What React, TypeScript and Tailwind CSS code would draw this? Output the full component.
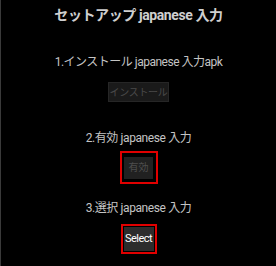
export default function App() {
  return (
    <div
      className="w-[276px] h-[266px] bg-black border-l border-[#3a3a3a] flex flex-col items-center text-[#c4c4c4] overflow-hidden whitespace-nowrap"
      style={{ fontFamily: 'Roboto, "Noto Sans CJK JP", sans-serif' }}
    >
      <div className="mt-[4px] text-[14px] leading-[22px] font-bold tracking-[-0.4px] text-[#cfcfcf]">セットアップ japanese 入力</div>
      <div className="mt-[27px] text-[12px] leading-[18px] tracking-[-0.5px]">1.インストール japanese 入力apk</div>
      <div className="mt-[11px] w-[61px] h-[20px] bg-[#1a1a1a] border border-[#262626] flex items-center justify-center text-[10px] tracking-[-0.3px] text-[#4a4a4a]">
        インストール
      </div>
      <div className="mt-[27px] text-[12px] leading-[18px] tracking-[-0.4px]">2.有効 japanese 入力</div>
      <div className="mt-[4px] w-[38px] h-[33px] border-2 border-[#e00000] flex items-center justify-center">
        <div className="w-[29px] h-[22px] bg-[#212121] flex items-center justify-center text-[10px] text-[#4e4e4e]">有効</div>
      </div>
      <div className="mt-[15px] text-[12px] leading-[18px] tracking-[-0.4px]">3.選択 japanese 入力</div>
      <div className="mt-[7px] w-[36px] h-[30px] border-2 border-[#e00000] flex items-center justify-center">
        <div className="w-[30px] h-[24px] bg-[#2c2c2c] flex items-center justify-center text-[11px] tracking-[-0.5px] text-white">Select</div>
      </div>
    </div>
  );
}
